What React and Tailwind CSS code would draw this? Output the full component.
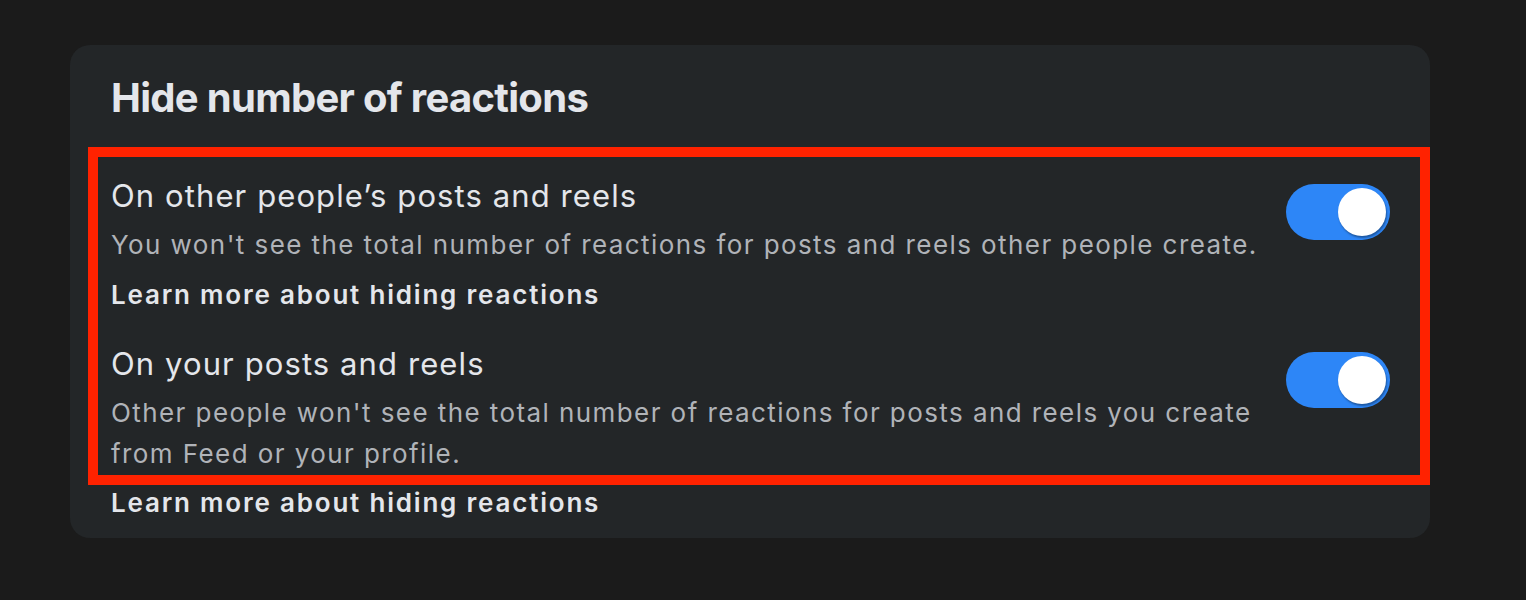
import React from "react";

function Toggle() {
  return (
    <div className="relative mt-[6px] h-[56px] w-[104px] shrink-0 rounded-full bg-[#2d86f7]">
      <div className="absolute right-[4px] top-[4px] h-[48px] w-[48px] rounded-full bg-white shadow-[1px_2px_2px_rgba(0,0,0,0.35)]" />
    </div>
  );
}

function Row({ title, desc, link, linkClass }) {
  return (
    <div className="flex items-start gap-[24px]">
      <div className="flex-1">
        <div className="text-[31px] leading-[36px] tracking-[1.1px] text-[#e4e6eb]">{title}</div>
        <div className="mt-[10px] text-[26px] leading-[41px] tracking-[1.42px] text-[#b0b3b8]">{desc}</div>
        <div className={"text-[26px] font-semibold leading-[41px] tracking-[1.8px] text-[#e4e6eb] " + linkClass}>{link}</div>
      </div>
      <Toggle />
    </div>
  );
}

export default function App() {
  return (
    <div
      className="min-h-[600px] w-full bg-[#1b1b1b] pl-[70px] pt-[45px]"
      style={{ fontFamily: "Inter, 'Noto Sans', sans-serif" }}
    >
      <div className="relative w-[1360px] rounded-[20px] bg-[#232628] pb-[15px] pl-[41px] pr-[40px] pt-[29px]">
        <h1 className="text-[40px] font-bold leading-[48px] tracking-[-0.7px] text-[#e4e6eb]">Hide number of reactions</h1>
        <div className="mt-[56px]">
          <Row
            title="On other people’s posts and reels"
            desc="You won't see the total number of reactions for posts and reels other people create."
            link="Learn more about hiding reactions"
            linkClass="mt-[9px]"
          />
        </div>
        <div className="mt-[31px]">
          <Row
            title="On your posts and reels"
            desc="Other people won't see the total number of reactions for posts and reels you create from Feed or your profile."
            link="Learn more about hiding reactions"
            linkClass="mt-[8px]"
          />
        </div>
        <div className="pointer-events-none absolute left-[18px] top-[102px] h-[338px] w-[1342px] border-[10px] border-[#ff2200]" />
      </div>
    </div>
  );
}
